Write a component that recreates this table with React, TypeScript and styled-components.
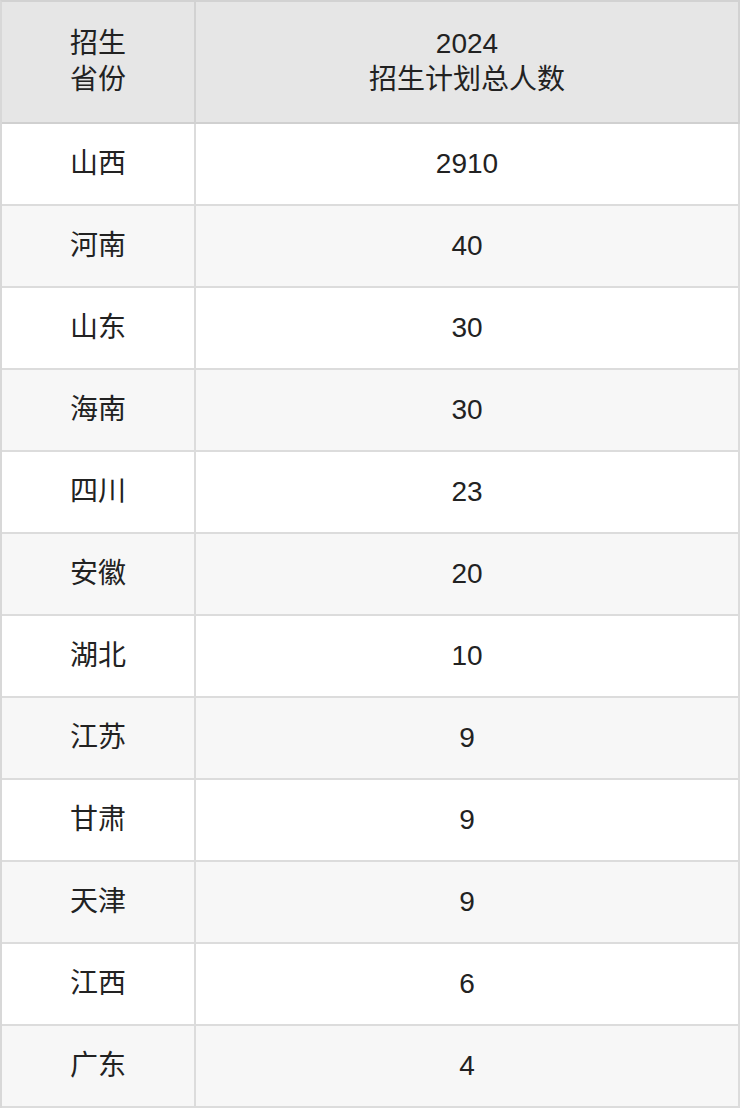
import React from "react";
import styled, { createGlobalStyle } from "styled-components";

const GlobalStyle = createGlobalStyle`
  html, body {
    margin: 0;
    padding: 0;
    background: #ffffff;
  }
  body {
    font-family: "Liberation Sans", "Noto Sans CJK SC", sans-serif;
  }
`;

const Table = styled.div`
  display: grid;
  grid-template-columns: 194px 1fr;
  width: 740px;
  box-sizing: border-box;
  border-top: 2px solid #d2d2d2;
  border-left: 2px solid #d8d8d8;
  font-family: "Liberation Sans", "Noto Sans CJK SC", sans-serif;
  color: #222222;
`;

const HeadCell = styled.div`
  box-sizing: border-box;
  height: 122px;
  display: flex;
  align-items: center;
  justify-content: center;
  text-align: center;
  background: #e6e6e6;
  border-right: 2px solid #d2d2d2;
  border-bottom: 2px solid #d0d0d0;
  font-size: 28px;
  line-height: 36px;
`;

const Cell = styled.div<{ $alt: boolean }>`
  box-sizing: border-box;
  height: 82px;
  display: flex;
  align-items: center;
  justify-content: center;
  text-align: center;
  background: ${(p) => (p.$alt ? "#f7f7f7" : "#ffffff")};
  border-right: 2px solid #dcdcdc;
  border-bottom: 2px solid #dcdcdc;
  font-size: 28px;
  line-height: 38px;
`;

const rows: [string, string][] = [
  ["山西", "2910"],
  ["河南", "40"],
  ["山东", "30"],
  ["海南", "30"],
  ["四川", "23"],
  ["安徽", "20"],
  ["湖北", "10"],
  ["江苏", "9"],
  ["甘肃", "9"],
  ["天津", "9"],
  ["江西", "6"],
  ["广东", "4"],
];

export default function App() {
  return (
    <>
      <GlobalStyle />
      <Table>
        <HeadCell>
          招生
          <br />
          省份
        </HeadCell>
        <HeadCell>
          2024
          <br />
          招生计划总人数
        </HeadCell>
        {rows.map(([prov, num], i) => (
          <React.Fragment key={prov + i}>
            <Cell $alt={i % 2 === 1}>{prov}</Cell>
            <Cell $alt={i % 2 === 1}>{num}</Cell>
          </React.Fragment>
        ))}
      </Table>
    </>
  );
}
